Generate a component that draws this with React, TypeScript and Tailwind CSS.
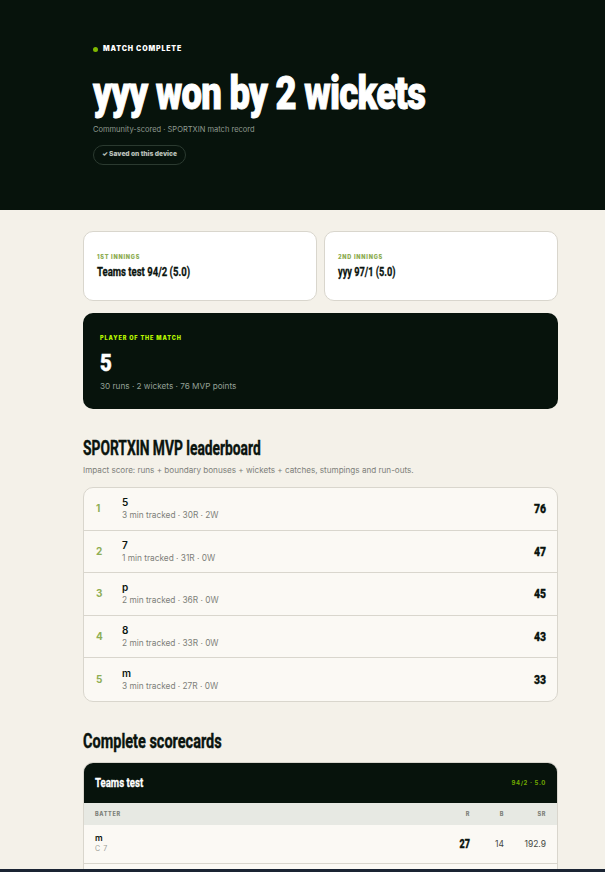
const condensed = "font-['Roboto',sans-serif] whitespace-nowrap";

const leaders = [
  { rank: 1, name: '5', meta: '3 min tracked · 30R · 2W', pts: 76 },
  { rank: 2, name: '7', meta: '1 min tracked · 31R · 0W', pts: 47 },
  { rank: 3, name: 'p', meta: '2 min tracked · 36R · 0W', pts: 45 },
  { rank: 4, name: '8', meta: '2 min tracked · 33R · 0W', pts: 43 },
  { rank: 5, name: 'm', meta: '3 min tracked · 27R · 0W', pts: 33 },
];

function InningsCard({ label, score, squeeze }: { label: string; score: string; squeeze: string }) {
  return (
    <div className="h-[70px] rounded-[10px] border border-[#d9d6cd] bg-white px-[13px] pt-[21px]">
      <p className="text-[5.5px] leading-[8px] font-black tracking-[0.14em] text-[#8fae55]">{label}</p>
      <p className={`${condensed} ${squeeze} mt-[2px] origin-left text-[13px] leading-[18px] font-bold text-[#0a140e] [-webkit-text-stroke:0.3px_#0a140e]`}>{score}</p>
    </div>
  );
}

export default function App() {
  return (
    <div className="relative h-[872px] overflow-hidden bg-[#f4f1e9] font-['Inter',sans-serif]">
      {/* Hero */}
      <div className="h-[210px] bg-[#07130c] pt-[44px] pl-[93px]">
        <div className="flex items-center gap-[5px]">
          <span className="size-[5px] rounded-full bg-[#7fb800]" />
          <span className="text-[7px] leading-[10px] font-black tracking-[0.12em] text-white">MATCH COMPLETE</span>
        </div>
        <h1 className={`${condensed} mt-[10px] origin-left scale-x-[0.775] text-[47px] leading-[58px] font-black tracking-[-0.02em] text-white [-webkit-text-stroke:1px_white]`}>yyy won by 2 wickets</h1>
        <p className="mt-[2px] text-[7.5px] leading-[12px] text-[#8f9a90]">Community-scored · SPORTXIN match record</p>
        <div className="mt-[9px] flex h-[20px] w-fit items-center rounded-full border border-[#2b3a30] px-[8px] text-[6.6px] font-black text-[#b4bcb4]">
          ✓ Saved on this device
        </div>
      </div>

      <div className="ml-[83px] w-[475px] pt-[21px]">
        <div className="grid grid-cols-2 gap-[7px]">
          <InningsCard label="1ST INNINGS" score="Teams test 94/2 (5.0)" squeeze="scale-x-[0.735]" />
          <InningsCard label="2ND INNINGS" score="yyy 97/1 (5.0)" squeeze="scale-x-[0.71]" />
        </div>

        {/* Player of the match */}
        <div className="mt-[12px] h-[96px] rounded-[10px] bg-[#07130c] pt-[21px] pl-[17px]">
          <p className="text-[5.5px] leading-[8px] font-black tracking-[0.16em] text-[#b6f500]">PLAYER OF THE MATCH</p>
          <p className={`${condensed} mt-[7px] origin-left scale-x-[0.85] text-[24px] leading-[28px] font-black text-white [-webkit-text-stroke:0.5px_white]`}>5</p>
          <p className="mt-[3px] text-[8.2px] leading-[12px] text-[#94a097]">30 runs · 2 wickets · 76 MVP points</p>
        </div>

        <h2 className={`${condensed} mt-[28px] origin-left scale-x-[0.69] text-[20px] leading-[22px] font-bold text-[#0a140e] [-webkit-text-stroke:0.4px_#0a140e]`}>SPORTXIN MVP leaderboard</h2>
        <p className="mt-[5px] text-[8.12px] leading-[12px] text-[#7d8079]">Impact score: runs + boundary bonuses + wickets + catches, stumpings and run-outs.</p>

        <div className="mt-[11px] overflow-hidden rounded-[10px] border border-[#d9d6cd] bg-[#fbf9f4]">
          {leaders.map((l) => (
            <div key={l.rank} className="flex h-[42.6px] items-center border-b border-[#d9d6cd] pr-[11px] pl-[12px] last:border-b-0">
              <span className="w-[26px] text-[10px] font-bold text-[#8fae55]">{l.rank}</span>
              <div className="flex-1">
                <p className="text-[10px] leading-[12px] font-semibold text-[#0a140e]">{l.name}</p>
                <p className="mt-[1px] text-[8.3px] leading-[12px] text-[#7d8079]">{l.meta}</p>
              </div>
              <span className={`${condensed} origin-right scale-x-[0.8] text-[13px] font-black text-[#0a140e] [-webkit-text-stroke:0.3px_#0a140e]`}>{l.pts}</span>
            </div>
          ))}
        </div>

        <h2 className={`${condensed} mt-[28px] origin-left scale-x-[0.725] text-[20px] leading-[22px] font-bold text-[#0a140e] [-webkit-text-stroke:0.4px_#0a140e]`}>Complete scorecards</h2>

        <div className="mt-[10px] overflow-hidden rounded-[10px] border border-[#d9d6cd] bg-[#fbf9f4]">
          <div className="flex h-[40px] items-center justify-between bg-[#07130c] px-[11px]">
            <span className={`${condensed} origin-left scale-x-[0.74] text-[13px] font-bold text-white [-webkit-text-stroke:0.3px_white]`}>Teams test</span>
            <span className="text-[6px] font-bold tracking-[0.1em] text-[#6fa800]">94/2 · 5.0</span>
          </div>
          <div className="flex h-[22px] items-center bg-[#e7e9e3] px-[11px] text-[5.5px] font-extrabold tracking-[0.12em] text-[#7d8079]">
            <span className="flex-1">BATTER</span>
            <span className="w-[34px] text-right">R</span>
            <span className="w-[34px] text-right">B</span>
            <span className="w-[42px] text-right">SR</span>
          </div>
          <div className="flex h-[39px] items-center border-b border-[#d9d6cd] px-[11px]">
            <div className="flex-1">
              <p className="text-[8.5px] leading-[11px] font-semibold text-[#0a140e]">m</p>
              <p className="text-[7px] leading-[10px] tracking-[0.08em] text-[#9a9c95]">C 7</p>
            </div>
            <span className={`${condensed} w-[34px] origin-right scale-x-[0.75] text-right text-[12px] font-black text-[#0a140e] [-webkit-text-stroke:0.3px_#0a140e]`}>27</span>
            <span className="w-[34px] text-right text-[8.5px] text-[#44483f]">14</span>
            <span className="w-[42px] text-right text-[8.5px] text-[#44483f]">192.9</span>
          </div>
          <div className="h-[40px]" />
        </div>
      </div>

      {/* Dark strip along the bottom of the window */}
      <div className="absolute inset-x-0 bottom-0 h-[3px] bg-[#1a2433]" />
    </div>
  );
}
